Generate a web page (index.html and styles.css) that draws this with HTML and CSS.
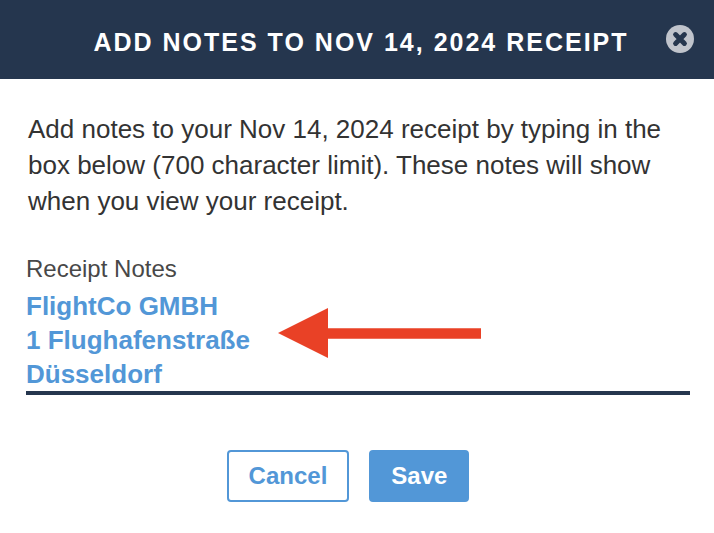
FILE: index.html
```html
<!DOCTYPE html>
<html lang="en">
<head>
<meta charset="utf-8">
<meta name="viewport" content="width=device-width, initial-scale=1">
<title>Add notes to receipt</title>
<link rel="stylesheet" href="styles.css">
</head>
<body>
<main class="dialog">
  <header class="header">
    <h1 class="title">ADD NOTES TO NOV 14, 2024 RECEIPT</h1>
    <button class="close" type="button" aria-label="Close">
      <svg viewBox="0 0 28 28" width="28" height="28" aria-hidden="true">
        <circle cx="14" cy="14" r="14" fill="#c0c4cc"/>
        <path d="M9.6 9.6 18.4 18.4M18.4 9.6 9.6 18.4" stroke="#25364e" stroke-width="5" stroke-linecap="round"/>
      </svg>
    </button>
  </header>
  <form class="content">
    <p class="intro">Add notes to your Nov 14, 2024 receipt by typing in the box below (700 character limit). These notes will show when you view your receipt.</p>
    <label class="label" for="notes">Receipt Notes</label>
    <div class="field">
      <textarea class="notes" id="notes" rows="3" maxlength="700" spellcheck="false">FlightCo GMBH
1 Flughafenstraße
Düsseldorf</textarea>
      <svg class="arrow" viewBox="0 0 204 50" width="204" height="50" aria-hidden="true">
        <path d="M0 25 50 0V20.3H203V30.7H50V50Z" fill="#e94126"/>
      </svg>
    </div>
    <div class="actions">
      <button class="button" type="button">Cancel</button>
      <button class="button primary" type="submit">Save</button>
    </div>
  </form>
</main>
</body>
</html>
```
FILE: styles.css
```css
* {
  box-sizing: border-box;
}

body {
  margin: 0;
  background: #fff;
  color: #333;
  font-family: "Liberation Sans", Arial, sans-serif;
}

.header {
  display: flex;
  align-items: flex-start;
  padding: 25px 20px 22px 56px;
  background: #25364e;
}

.title {
  flex: 1;
  margin: 0;
  padding-top: 3px;
  color: #fff;
  font-size: 25px;
  line-height: 29px;
  letter-spacing: 2px;
  text-align: center;
}

.close {
  padding: 0;
  border: 0;
  background: none;
}

.close svg {
  display: block;
}

.content {
  padding: 32px 24px 32px 26px;
}

.intro {
  margin: 0 0 36px;
  padding-left: 2px;
  font-size: 26px;
  line-height: 36px;
}

.label {
  display: block;
  color: #484848;
  font-size: 24px;
  line-height: 28px;
}

.field {
  position: relative;
}

.notes {
  display: block;
  width: 100%;
  height: 112px;
  padding: 6px 0 0;
  border: 0;
  border-bottom: 4px solid #25364e;
  border-radius: 0;
  outline: 0;
  overflow: hidden;
  resize: none;
  background: none;
  color: #5297d7;
  font: bold 26px/34px "Liberation Sans", Arial, sans-serif;
}

.arrow {
  position: absolute;
  top: 25px;
  left: 252px;
}

.actions {
  display: flex;
  justify-content: center;
  gap: 20px;
  margin-top: 55px;
  padding-right: 20px;
}

.button {
  padding: 10px 20px;
  border: 2px solid #5297d7;
  border-radius: 4px;
  background: #fff;
  color: #5297d7;
  font: bold 24px/28px "Liberation Sans", Arial, sans-serif;
}

.primary {
  background: #5297d7;
  color: #fff;
}
```
